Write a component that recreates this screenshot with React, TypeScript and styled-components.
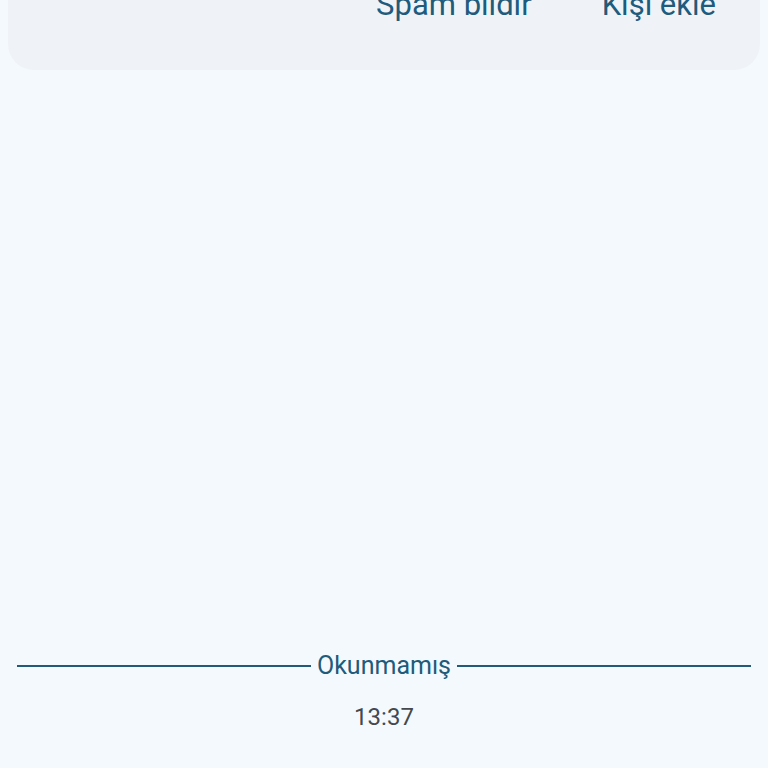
import React from "react";
import styled, { createGlobalStyle } from "styled-components";

const Global = createGlobalStyle`
  html, body { margin: 0; padding: 0; background: #f4f9fe; }
  body { font-family: Roboto, "Noto Sans", sans-serif; }
`;

const Page = styled.div`
  width: 768px;
  height: 768px;
  overflow: hidden;
  background: #f4f9fe;
  display: flex;
  flex-direction: column;
`;

const Card = styled.div`
  margin: -60px 8px 0 8px;
  height: 130px;
  background: #eff3f8;
  border-radius: 0 0 26px 26px;
  display: flex;
  justify-content: flex-end;
  align-items: flex-start;
  padding: 47px 44px 0 0;
  box-sizing: border-box;
  gap: 70px;
`;

const ActionButton = styled.span`
  font-size: 31px;
  color: #1e5b7c;
  line-height: 36px;
`;

const Spacer = styled.div`
  flex: 1;
`;

const Divider = styled.div`
  display: flex;
  align-items: center;
  gap: 6px;
  padding: 0 17px 0 17px;
  height: 30px;
`;

const Rule = styled.div`
  flex: 1;
  height: 2px;
  background: #225a78;
`;

const DividerLabel = styled.span`
  font-size: 25px;
  color: #225a78;
  line-height: 30px;
`;

const Time = styled.div`
  text-align: center;
  font-size: 24px;
  color: #45484c;
  margin: 22px 0 37px 0;
  line-height: 28px;
`;

export default function App() {
  return (
    <>
      <Global />
      <Page>
        <Card>
          <ActionButton>Spam bildir</ActionButton>
          <ActionButton>Kişi ekle</ActionButton>
        </Card>
        <Spacer />
        <Divider>
          <Rule />
          <DividerLabel>Okunmamış</DividerLabel>
          <Rule />
        </Divider>
        <Time>13:37</Time>
      </Page>
    </>
  );
}
